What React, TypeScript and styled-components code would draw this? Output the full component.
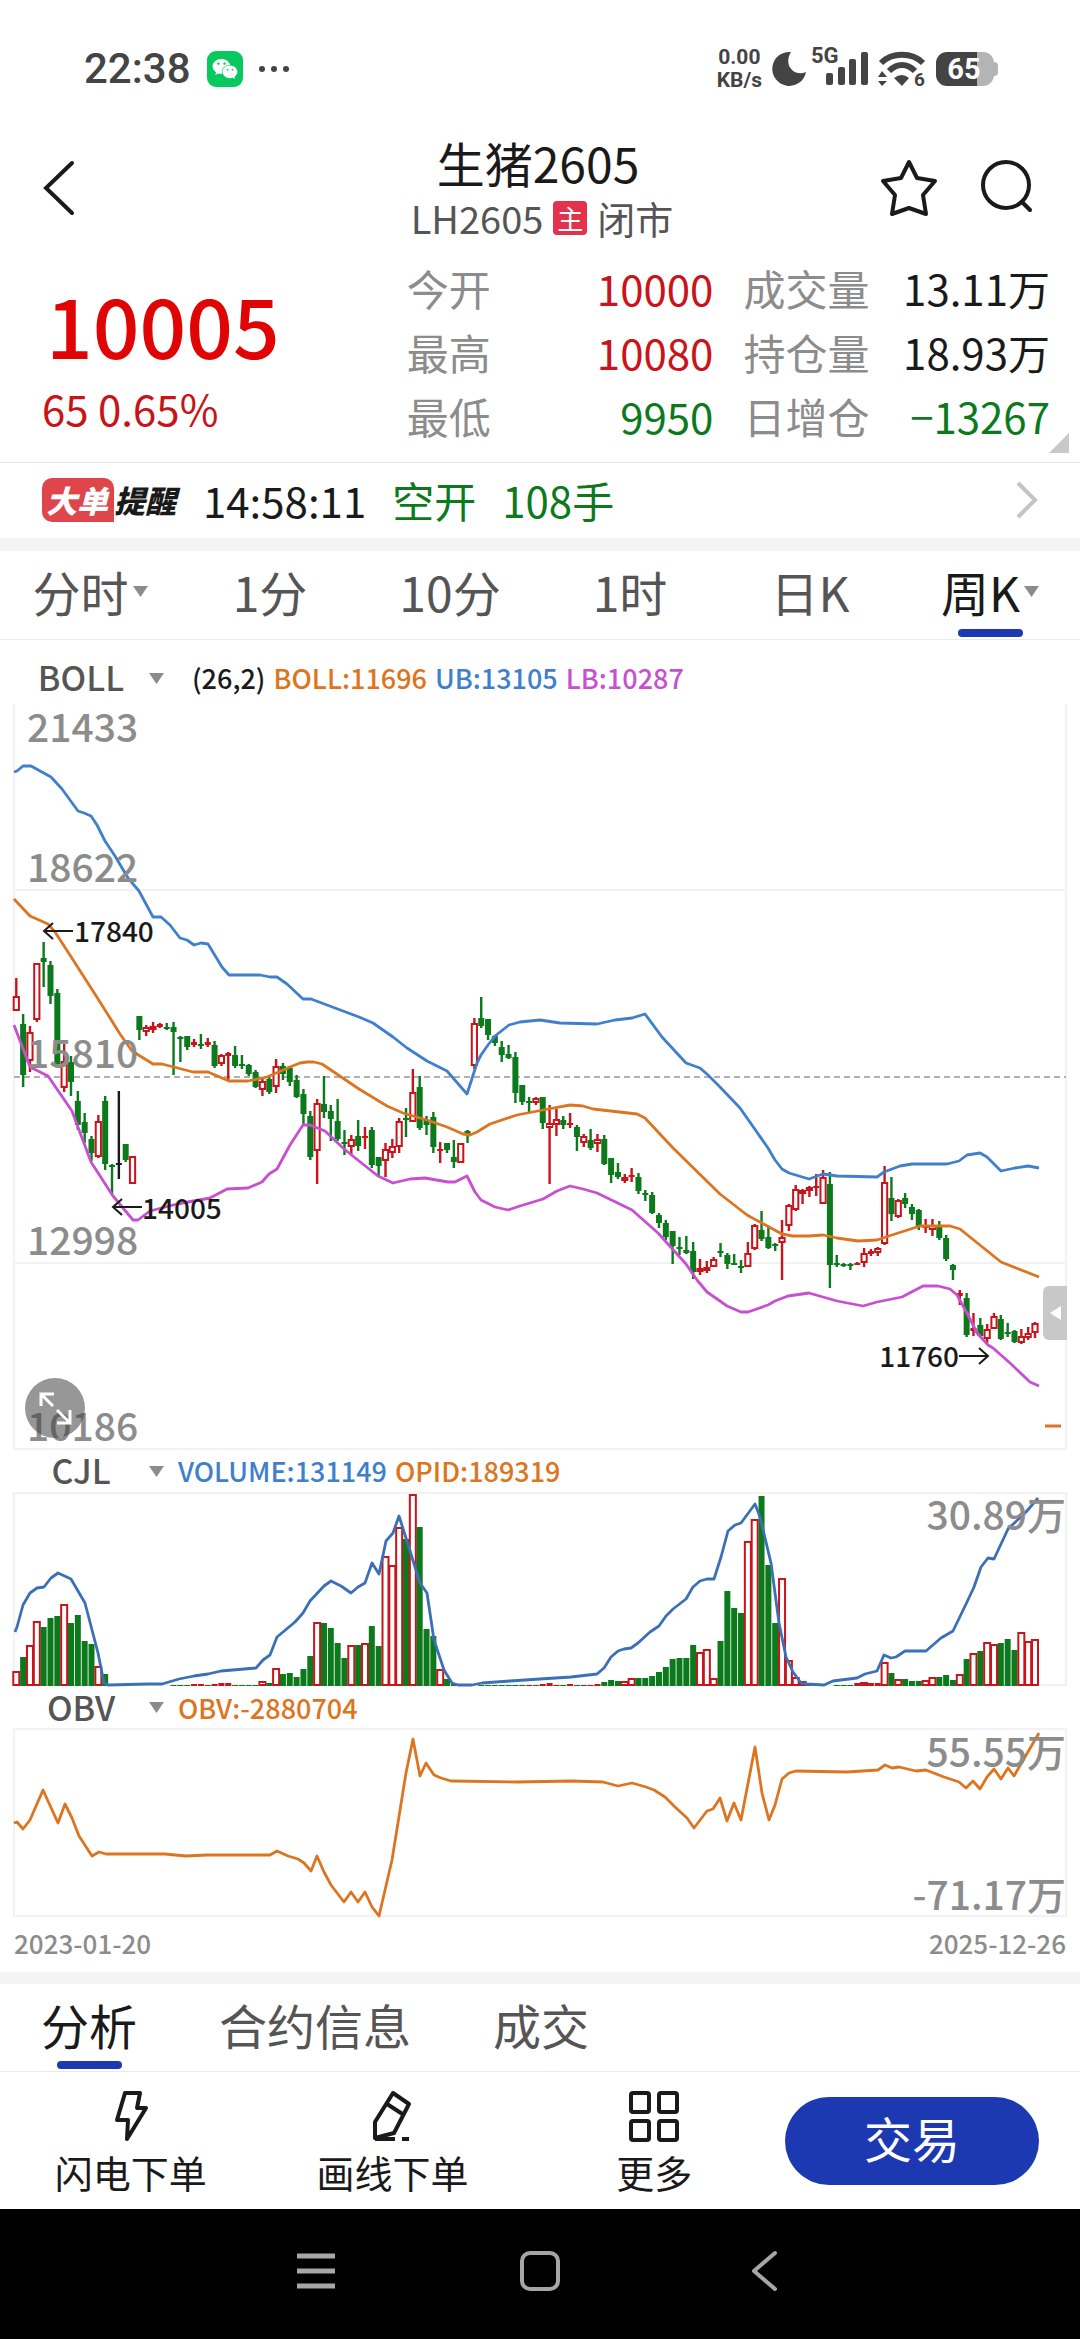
import React from "react";
import styled, { createGlobalStyle } from "styled-components";
import { FaWeixin } from "react-icons/fa";

const RED = "#c8141a";
const GREEN = "#0c7a1c";
const BLUE = "#3f7fcb";
const ORANGE = "#dd7520";
const PURPLE = "#c84fd0";
const INK = "#1a1a1a";
const GREY = "#8c8c8c";
const BRAND = "#1c39b2";

const GlobalStyle = createGlobalStyle`
  * { box-sizing: border-box; }
  body {
    margin: 0;
    background: #fff;
    color: ${INK};
    font-family: "Noto Sans CJK SC", "Noto Sans", sans-serif;
  }
  button, select {
    font: inherit;
    color: inherit;
    background: none;
    border: 0;
    padding: 0;
    margin: 0;
  }
  svg { display: block; flex: none; overflow: visible; }
  dl, dd, dt, h1, p { margin: 0; font-weight: inherit; }
`;

const Page = styled.div`
  display: flex;
  flex-direction: column;
  min-height: 100vh;
`;

/* ---------- status bar ---------- */

const StatusBar = styled.div`
  display: flex;
  align-items: center;
  justify-content: space-between;
  height: 112px;
  padding: 26px 82px 0 84px;
  color: #444;
`;

const StatusGroup = styled.div<{ $gap: number }>`
  display: flex;
  align-items: center;
  gap: ${(p) => p.$gap}px;
`;

const Clock = styled.span`
  font-family: Roboto, sans-serif;
  font-size: 42px;
  line-height: 48px;
  font-weight: 500;
`;

const WeChatBadge = styled.span`
  display: flex;
  align-items: center;
  justify-content: center;
  width: 36px;
  height: 36px;
  border-radius: 9px;
  background: #07c95f;
  color: #fff;
  font-size: 26px;
`;

const NetSpeed = styled.span`
  font-family: Roboto, sans-serif;
  font-size: 21px;
  line-height: 23px;
  font-weight: 700;
  text-align: center;
`;

const Battery = styled.span`
  display: flex;
  align-items: center;
  justify-content: center;
  width: 58px;
  height: 34px;
  padding-right: 2px;
  border-radius: 11px;
  background: linear-gradient(90deg, #444 0 70%, #b4b4b4 70%);
  color: #fff;
  font-family: Roboto, sans-serif;
  font-size: 29px;
  line-height: 34px;
  font-weight: 700;
`;

const BatteryWrap = styled.span`
  display: flex;
  align-items: center;
  &::after {
    content: "";
    width: 4px;
    height: 14px;
    border-radius: 0 4px 4px 0;
    background: #b4b4b4;
  }
`;

/* ---------- header ---------- */

const Header = styled.header`
  display: grid;
  grid-template-columns: 1fr auto 1fr;
  align-items: center;
  padding: 22px 46px 0 42px;
`;

const HeaderTitle = styled.div`
  display: flex;
  flex-direction: column;
  align-items: center;
  gap: 4px;
`;

const Title = styled.h1`
  font-size: 48px;
  line-height: 56px;
`;

const SubTitle = styled.div`
  display: flex;
  align-items: center;
  gap: 10px;
  padding-left: 8px;
  font-size: 38px;
  line-height: 48px;
  color: #555;
`;

const MainTag = styled.span`
  width: 34px;
  height: 34px;
  border-radius: 4px;
  background: #e5324c;
  color: #fff;
  font-size: 26px;
  line-height: 34px;
  text-align: center;
`;

const HeaderActions = styled.div`
  display: flex;
  justify-content: flex-end;
  gap: 42px;
`;

const IconButton = styled.button`
  display: flex;
  justify-self: start;
`;

/* ---------- quote ---------- */

const Quote = styled.section`
  position: relative;
  display: grid;
  grid-template-columns: 35% 1fr;
  padding: 14px 30px 14px 42px;
  border-bottom: 1px solid #e6e6e6;
`;

const Price = styled.p`
  padding: 16px 4px 0;
  font-size: 82px;
  line-height: 104px;
  font-weight: 500;
  color: #e00404;
`;

const Change = styled.p`
  font-size: 42px;
  line-height: 64px;
  color: #c81418;
`;

const Stats = styled.dl`
  display: grid;
  grid-auto-flow: column;
  grid-template-rows: repeat(3, 64px);
  grid-auto-columns: 1fr;
  column-gap: 30px;
  padding-left: 12px;
`;

const Stat = styled.div`
  display: flex;
  align-items: center;
  justify-content: space-between;
  font-size: 42px;
  line-height: 64px;
  white-space: nowrap;
`;

const StatName = styled.dt`
  color: ${GREY};
`;

const StatValue = styled.dd<{ $color: string }>`
  color: ${(p) => p.$color};
`;

const MoreCorner = styled.span`
  position: absolute;
  right: 11px;
  bottom: 9px;
  border-left: 20px solid transparent;
  border-bottom: 20px solid #c8c8c8;
`;

/* ---------- big order alert ---------- */

const Alert = styled.a`
  display: flex;
  align-items: center;
  height: 75px;
  padding: 0 41px 2px 42px;
  color: ${GREEN};
  font-size: 42px;
  line-height: 60px;
  text-decoration: none;
`;

const AlertLogo = styled.span`
  display: flex;
  align-items: center;
  margin-right: 27px;
  color: ${INK};
  font-size: 31px;
  line-height: 44px;
  font-weight: 900;
  font-style: italic;
`;

const AlertBadge = styled.span`
  padding: 0 6px 0 4px;
  border-radius: 10px 10px 0 10px;
  background: #df464c;
  color: #fff;
`;

const AlertTime = styled.time`
  margin-right: 26px;
  color: ${INK};
`;

const AlertAction = styled.span`
  margin-right: 26px;
`;

const AlertArrow = styled.span`
  margin-left: auto;
`;

const Band = styled.div<{ $height: number }>`
  height: ${(p) => p.$height}px;
  background: #f4f4f4;
`;

/* ---------- tabs ---------- */

const PeriodTabs = styled.nav`
  display: grid;
  grid-template-columns: repeat(6, 1fr);
  height: 89px;
  border-bottom: 1px solid #e9e9e9;
`;

const InfoTabs = styled.nav`
  display: flex;
  gap: 82px;
  height: 88px;
  padding-left: 41px;
  border-bottom: 1px solid #e9e9e9;
`;

const Tab = styled.button<{ $active?: boolean }>`
  display: flex;
  flex-direction: column;
  align-items: center;
  justify-content: space-between;
  padding: 7px 0 2px;
  font-size: 48px;
  line-height: 66px;
  color: ${(p) => (p.$active ? INK : "#555")};
  &::after {
    content: "";
    width: 65px;
    height: 8px;
    border-radius: 4px;
    background: ${(p) => (p.$active ? BRAND : "transparent")};
  }
`;

const TabLabel = styled.span`
  display: flex;
  align-items: center;
  gap: 4px;
`;

/* ---------- charts ---------- */

const IndicatorBar = styled.div<{ $height: number; $top?: number; $gap: number }>`
  display: flex;
  align-items: center;
  gap: ${(p) => p.$gap}px;
  height: ${(p) => p.$height}px;
  padding: ${(p) => p.$top ?? 0}px 13px 0;
`;

const Picker = styled.label`
  display: flex;
  align-items: center;
`;

const PickerSelect = styled.select`
  appearance: none;
  width: 136px;
  height: 44px;
  padding-bottom: 2px;
  font-size: 34px;
  line-height: 42px;
  font-weight: 500;
  color: #555;
  text-align-last: center;
`;

const Legend = styled.div`
  display: flex;
  gap: 8px;
  font-size: 27px;
  line-height: 40px;
  font-weight: 500;
`;

const LegendItem = styled.span<{ $color: string }>`
  color: ${(p) => p.$color};
`;

const ChartFrame = styled.div`
  position: relative;
  margin: 0 13px;
`;

const ChartSvg = styled.svg`
  width: 100%;
  height: auto;
  font-weight: 500;
`;

const ExpandButton = styled.button`
  position: absolute;
  left: 12px;
  bottom: 11px;
  width: 60px;
  height: 60px;
  border-radius: 50%;
  background: rgba(70, 70, 70, 0.56);
`;

const DrawerHandle = styled.button`
  position: absolute;
  right: 0;
  bottom: 14.7%;
  display: flex;
  align-items: center;
  justify-content: center;
  width: 24px;
  height: 54px;
  border-radius: 6px 0 0 6px;
  background: #c8c8c8;
`;

const DateRange = styled.div`
  display: flex;
  align-items: center;
  justify-content: space-between;
  height: 55px;
  padding: 0 14px 4px;
  font-size: 26px;
  line-height: 36px;
  font-weight: 500;
  color: ${GREY};
`;

/* ---------- bottom ---------- */

const ActionBar = styled.div`
  display: flex;
  align-items: center;
  height: 137px;
  padding: 0 41px 0 0;
`;

const Actions = styled.div`
  flex: 1;
  display: grid;
  grid-template-columns: repeat(3, 1fr);
`;

const Action = styled.button`
  display: flex;
  flex-direction: column;
  align-items: center;
  gap: 4px;
  padding-top: 6px;
  font-size: 38px;
  line-height: 52px;
`;

const TradeButton = styled.button`
  width: 254px;
  height: 88px;
  padding-bottom: 8px;
  border-radius: 44px;
  background: ${BRAND};
  color: #fff;
  font-size: 48px;
  line-height: 80px;
`;

const SystemNav = styled.nav`
  display: grid;
  grid-template-columns: repeat(3, 224px);
  justify-content: center;
  justify-items: center;
  align-items: center;
  flex: 1;
  min-height: 130px;
  padding-bottom: 6px;
  background: #000;
`;

const NavButton = styled.button`
  display: flex;
`;

/* ---------- data ---------- */

type Candle = [string, number, number, number, number];

// kind (r = up, g = down, k = flat), high, body top, body bottom, low
const candles: Candle[] = [
  ["r", 978, 996, 1011, 1011], ["g", 1014, 1024, 1075, 1087], ["r", 1026, 1032, 1061, 1072], ["r", 963, 963, 1020, 1022],
  ["g", 942, 958, 962, 987], ["g", 961, 965, 996, 1004], ["g", 989, 993, 1064, 1066], ["r", 1044, 1061, 1088, 1092],
  ["g", 1056, 1062, 1082, 1096], ["g", 1091, 1101, 1125, 1130], ["g", 1113, 1122, 1133, 1143], ["g", 1136, 1139, 1153, 1161],
  ["r", 1115, 1121, 1157, 1158], ["g", 1096, 1101, 1164, 1170], ["g", 1164, 1165, 1167, 1195], ["k", 1091, 1163, 1165, 1179],
  ["g", 1144, 1144, 1160, 1162], ["r", 1156, 1156, 1184, 1184], ["g", 1016, 1016, 1030, 1040], ["r", 1025, 1027, 1032, 1036],
  ["r", 1022, 1026, 1030, 1033], ["r", 1023, 1024, 1027, 1028], ["g", 1023, 1027, 1029, 1030], ["g", 1022, 1027, 1032, 1075],
  ["g", 1036, 1037, 1039, 1062], ["g", 1036, 1036, 1047, 1050], ["r", 1039, 1042, 1045, 1047], ["g", 1034, 1044, 1045, 1049],
  ["r", 1038, 1042, 1045, 1047], ["g", 1041, 1045, 1066, 1068], ["r", 1054, 1055, 1064, 1066], ["r", 1052, 1053, 1056, 1080],
  ["g", 1046, 1055, 1066, 1068], ["g", 1055, 1064, 1065, 1069], ["g", 1064, 1065, 1074, 1076], ["g", 1070, 1072, 1087, 1088],
  ["r", 1079, 1081, 1090, 1096], ["g", 1076, 1079, 1092, 1094], ["r", 1059, 1066, 1087, 1093], ["g", 1063, 1066, 1074, 1080],
  ["g", 1066, 1068, 1082, 1086], ["g", 1075, 1080, 1097, 1098], ["g", 1089, 1094, 1114, 1125], ["g", 1111, 1116, 1157, 1160],
  ["r", 1099, 1103, 1151, 1184], ["g", 1076, 1104, 1112, 1118], ["g", 1105, 1111, 1119, 1141], ["g", 1099, 1121, 1139, 1141],
  ["g", 1130, 1142, 1144, 1155], ["r", 1135, 1139, 1147, 1154], ["g", 1120, 1136, 1146, 1151], ["r", 1127, 1136, 1138, 1149],
  ["g", 1127, 1130, 1165, 1168], ["g", 1157, 1157, 1166, 1176], ["r", 1143, 1149, 1161, 1177], ["r", 1139, 1146, 1153, 1158],
  ["r", 1118, 1121, 1147, 1153], ["g", 1108, 1118, 1119, 1137], ["r", 1069, 1092, 1122, 1122], ["g", 1076, 1087, 1128, 1130],
  ["g", 1116, 1120, 1125, 1135], ["g", 1112, 1117, 1147, 1153], ["r", 1142, 1149, 1150, 1163], ["g", 1143, 1143, 1150, 1153],
  ["g", 1140, 1157, 1162, 1168], ["r", 1143, 1143, 1163, 1163], ["g", 1130, 1131, 1135, 1143], ["r", 1018, 1023, 1066, 1069],
  ["g", 997, 1018, 1026, 1028], ["g", 1019, 1019, 1035, 1040], ["g", 1035, 1036, 1043, 1046], ["g", 1041, 1047, 1055, 1062],
  ["g", 1045, 1054, 1058, 1059], ["g", 1052, 1057, 1093, 1103], ["g", 1085, 1085, 1102, 1105], ["g", 1097, 1101, 1102, 1112],
  ["r", 1097, 1098, 1103, 1105], ["g", 1097, 1097, 1123, 1129], ["r", 1105, 1123, 1128, 1184], ["r", 1109, 1119, 1125, 1136],
  ["g", 1116, 1120, 1125, 1129], ["r", 1113, 1123, 1125, 1128], ["g", 1125, 1127, 1137, 1151], ["r", 1134, 1136, 1143, 1147],
  ["g", 1129, 1140, 1148, 1150], ["r", 1134, 1139, 1144, 1152], ["g", 1135, 1139, 1164, 1165], ["g", 1158, 1158, 1175, 1183],
  ["g", 1163, 1172, 1177, 1179], ["r", 1174, 1177, 1181, 1183], ["r", 1168, 1175, 1177, 1182], ["g", 1173, 1177, 1191, 1194],
  ["g", 1190, 1193, 1195, 1201], ["g", 1192, 1195, 1213, 1214], ["g", 1213, 1215, 1223, 1228], ["g", 1220, 1223, 1237, 1240],
  ["g", 1231, 1231, 1246, 1264], ["g", 1237, 1247, 1249, 1255], ["g", 1236, 1250, 1253, 1254], ["g", 1242, 1251, 1272, 1279],
  ["r", 1259, 1268, 1272, 1275], ["r", 1261, 1267, 1271, 1273], ["r", 1257, 1259, 1267, 1267], ["g", 1243, 1251, 1253, 1257],
  ["g", 1253, 1255, 1264, 1269], ["g", 1254, 1263, 1264, 1265], ["g", 1260, 1266, 1267, 1273], ["r", 1242, 1253, 1267, 1267],
  ["r", 1224, 1225, 1249, 1250], ["g", 1211, 1230, 1239, 1241], ["g", 1227, 1237, 1248, 1249], ["g", 1243, 1244, 1246, 1251],
  ["r", 1220, 1237, 1243, 1280], ["r", 1204, 1205, 1226, 1231], ["r", 1185, 1189, 1210, 1211], ["r", 1189, 1190, 1194, 1204],
  ["r", 1186, 1187, 1191, 1197], ["r", 1174, 1186, 1188, 1196], ["r", 1170, 1177, 1204, 1204], ["g", 1172, 1184, 1265, 1288],
  ["g", 1255, 1263, 1264, 1267], ["g", 1263, 1264, 1266, 1267], ["g", 1263, 1264, 1266, 1270], ["r", 1262, 1263, 1264, 1265],
  ["r", 1248, 1253, 1263, 1267], ["r", 1249, 1251, 1254, 1256], ["r", 1247, 1248, 1253, 1256], ["r", 1166, 1182, 1244, 1245],
  ["g", 1177, 1198, 1214, 1221], ["r", 1199, 1200, 1217, 1218], ["g", 1193, 1198, 1204, 1208], ["g", 1204, 1207, 1214, 1220],
  ["g", 1209, 1210, 1227, 1230], ["r", 1219, 1225, 1228, 1233], ["r", 1219, 1225, 1230, 1236], ["g", 1221, 1226, 1238, 1240],
  ["g", 1235, 1238, 1259, 1261], ["g", 1264, 1265, 1270, 1280], ["r", 1290, 1293, 1296, 1305], ["g", 1293, 1298, 1335, 1337],
  ["r", 1313, 1328, 1331, 1336], ["g", 1318, 1325, 1336, 1337], ["r", 1324, 1329, 1339, 1343], ["r", 1313, 1316, 1329, 1329],
  ["g", 1315, 1319, 1339, 1340], ["g", 1323, 1332, 1333, 1337], ["g", 1330, 1331, 1342, 1343], ["r", 1329, 1336, 1343, 1344],
  ["r", 1327, 1333, 1338, 1340], ["r", 1322, 1323, 1333, 1338],
];

// One entry per week, "r" for an up week and "g" for a down week, followed by the bar height
const volumes = (
  "r15 g29 r41 r65 g59 g68 g70 r82 g63 g71 g45 g42 r20 g12 g0 g0 g0 g0 g0 g0 g0 g0 g0 g1 g1 g1 r2 r2 g1 r2 " +
  "r3 r3 g1 g1 g1 g1 r5 g3 r18 g12 g13 g9 g17 g30 r64 g63 g58 g43 g28 r41 g41 r43 g60 g40 r130 r121 r159 g147 r192 g159 " +
  "g57 g50 r17 g7 g2 g0 g0 g0 g1 g1 g1 g1 g1 g1 g1 r1 g1 r2 r3 r1 g1 r2 g1 r1 r1 r2 g4 g6 g5 r5 " +
  "r8 g8 g8 g10 g14 g19 g27 g28 g28 g41 r34 r37 r8 g45 g95 g78 g73 r145 r167 g190 g121 g63 r108 r26 r9 r5 g1 g0 g0 g0 " +
  "g1 g1 g1 r3 r4 r3 r3 r24 g13 r7 g7 g5 g5 r6 r9 g9 g11 g6 r12 g27 r33 g35 r44 r42 g43 g47 g36 r54 r45 r47"
).split(" ");

const upperBand =
  "14,772 17,771 23,766 31,766 51,777 62,789 78,811 84,813 91,816 97,825 105,841 115,856 128,878 139,891 153,917 161,917 170,925 180,938 187,940 194,945 201,943 208,944 222,967 229,975 260,975 270,977 277,977 287,984 303,999 311,999 343,1011 359,1017 373,1023 393,1037 407,1048 427,1061 447,1071 467,1094 477,1063 481,1055 488,1045 495,1036 509,1025 520,1022 540,1020 560,1023 597,1024 615,1020 632,1018 645,1014 662,1037 686,1063 700,1068 708,1075 720,1087 740,1108 768,1148 775,1160 782,1169 789,1173 809,1179 823,1174 837,1176 877,1177 884,1172 900,1166 912,1164 947,1164 959,1161 967,1155 980,1153 987,1157 1001,1171 1015,1168 1028,1166 1039,1168";
const middleBand =
  "14,899 30,916 48,924 55,932 68,952 100,1002 120,1034 132,1051 153,1064 162,1064 193,1072 208,1072 229,1081 248,1081 267,1077 290,1067 300,1063 307,1062 314,1062 322,1064 359,1089 387,1106 403,1113 427,1120 447,1127 463,1134 470,1135 477,1132 490,1124 517,1115 543,1110 570,1105 583,1106 593,1109 637,1114 645,1118 673,1148 720,1194 747,1215 782,1234 793,1236 809,1236 823,1235 837,1238 858,1241 877,1240 892,1235 920,1226 933,1226 950,1226 960,1229 1001,1262 1039,1277";
const lowerBand =
  "14,1025 30,1067 48,1076 72,1111 91,1162 113,1196 133,1220 138,1220 150,1211 177,1204 210,1198 227,1189 248,1188 262,1182 269,1174 277,1169 290,1145 303,1125 310,1125 325,1131 343,1148 359,1161 378,1176 393,1183 410,1179 425,1178 448,1182 455,1182 467,1176 475,1192 481,1200 495,1207 508,1210 520,1206 543,1199 557,1191 570,1186 583,1189 597,1193 632,1210 658,1233 686,1264 697,1280 707,1292 720,1301 727,1306 741,1312 748,1312 768,1305 775,1301 788,1296 809,1293 837,1301 863,1306 877,1302 902,1297 923,1286 938,1286 950,1289 957,1295 967,1313 977,1333 988,1345 993,1348 1010,1363 1030,1382 1039,1386";
const openInterest =
  "15,1632 17,1627 23,1605 30,1593 37,1588 44,1587 51,1578 58,1573 71,1579 85,1603 98,1653 104,1683 108,1685 148,1684 162,1684 179,1679 194,1676 208,1674 221,1671 256,1668 263,1660 270,1655 277,1637 295,1622 303,1613 310,1601 324,1586 331,1581 341,1586 351,1593 358,1587 365,1583 372,1563 379,1574 386,1541 393,1533 399,1516 406,1538 420,1583 427,1593 434,1640 444,1670 452,1683 458,1685 472,1685 482,1683 510,1681 540,1679 571,1677 597,1674 604,1668 611,1657 618,1651 624,1649 631,1648 638,1643 650,1632 659,1626 666,1616 673,1609 686,1599 693,1587 700,1581 707,1579 714,1579 721,1557 728,1531 735,1525 741,1523 755,1504 760,1517 771,1563 779,1623 786,1657 793,1672 801,1683 807,1684 824,1685 833,1681 857,1678 865,1674 877,1671 884,1655 891,1658 896,1657 905,1651 926,1651 941,1638 953,1631 967,1602 974,1587 981,1567 988,1558 994,1559 1001,1544 1008,1529 1026,1512 1038,1498";
const obvLine =
  "14,1823 17,1822 23,1829 30,1820 43,1790 58,1823 65,1804 72,1818 79,1836 92,1856 99,1852 106,1854 165,1854 186,1856 207,1855 255,1855 270,1855 277,1851 288,1856 298,1859 304,1863 311,1871 317,1856 324,1872 331,1885 344,1902 351,1892 358,1902 365,1892 372,1907 379,1916 392,1860 406,1773 413,1739 420,1776 426,1763 434,1775 441,1778 451,1781 517,1782 572,1781 603,1782 618,1786 632,1783 646,1787 654,1790 665,1797 675,1807 687,1818 694,1828 707,1811 713,1809 720,1798 727,1821 734,1803 741,1820 755,1747 762,1793 769,1820 775,1805 782,1779 789,1773 796,1771 847,1772 878,1770 885,1765 892,1768 899,1767 916,1771 926,1770 944,1777 959,1782 966,1788 973,1781 980,1789 987,1777 994,1769 1001,1779 1008,1768 1014,1776 1025,1757 1039,1733";

const weekX = (i: number) => 16.3 + i * 6.837;

const periods = [
  { name: "分时", menu: true },
  { name: "1分" },
  { name: "10分" },
  { name: "1时" },
  { name: "日K" },
  { name: "周K", menu: true, active: true },
];

const stats = [
  { name: "今开", value: "10000", color: RED },
  { name: "最高", value: "10080", color: RED },
  { name: "最低", value: "9950", color: GREEN },
  { name: "成交量", value: "13.11万", color: INK },
  { name: "持仓量", value: "18.93万", color: INK },
  { name: "日增仓", value: "−13267", color: GREEN },
];

/* ---------- pieces ---------- */

const Triangle = () => (
  <svg width="15" height="11" viewBox="0 0 15 11" fill={GREY}>
    <path d="M0 0h15L7.5 11z" />
  </svg>
);

function Indicator(props: {
  name: string;
  height: number;
  top?: number;
  gap: number;
  items: [string, string][];
}) {
  return (
    <IndicatorBar $height={props.height} $top={props.top} $gap={props.gap}>
      <Picker>
        <PickerSelect aria-label={props.name} defaultValue={props.name}>
          <option>{props.name}</option>
        </PickerSelect>
        <Triangle />
      </Picker>
      <Legend>
        {props.items.map(([text, color]) => (
          <LegendItem key={text} $color={color}>
            {text}
          </LegendItem>
        ))}
      </Legend>
    </IndicatorBar>
  );
}

const Line = ({ points, color }: { points: string; color: string }) => (
  <polyline points={points} fill="none" stroke={color} strokeWidth="2.8" strokeLinejoin="round" />
);

function PriceChart() {
  return (
    <ChartFrame>
      <ChartSvg viewBox="13 704 1054 745">
        <path d="M14 704V1449H1066V704M14 890H1066M14 1263H1066" fill="none" stroke="#f2f2f2" strokeWidth="2" />
        <path d="M14 1077H1066" stroke="#b0b0b0" strokeWidth="2" strokeDasharray="6 4" />
        {candles.map(([kind, high, top, bottom, low], i) => {
          const x = weekX(i);
          const color = kind === "r" ? RED : kind === "g" ? GREEN : INK;
          const size = Math.max(bottom - top, 2);
          return (
            <g key={i} stroke={color} strokeWidth="2.4">
              <path d={`M${x} ${high}V${top}M${x} ${bottom}V${low}`} />
              {kind === "r" && size > 3 ? (
                <rect x={x - 2.6} y={top + 1} width="5.2" height={size - 2} fill="#fff" strokeWidth="2" />
              ) : (
                <rect x={x - 3} y={top} width="6" height={size} fill={color} stroke="none" />
              )}
            </g>
          );
        })}
        <Line points={upperBand} color={BLUE} />
        <Line points={middleBand} color={ORANGE} />
        <Line points={lowerBand} color={PURPLE} />
        <path d="M1045 1426h16" stroke={ORANGE} strokeWidth="3" />
        <g fontSize="39" fill={GREY}>
          <text x="27" y="742">21433</text>
          <text x="27" y="882">18622</text>
          <text x="27" y="1068">15810</text>
          <text x="27" y="1255">12998</text>
          <text x="27" y="1441">10186</text>
        </g>
        <g fontSize="28" fill={INK}>
          <text x="74" y="942">17840</text>
          <text x="142" y="1219">14005</text>
          <text x="959" y="1367" textAnchor="end">11760</text>
        </g>
        <path
          d="M73 931H44M53 923l-9 8 9 8M142 1207H113M122 1199l-9 8 9 8M959 1356h28M979 1348l9 8-9 8"
          fill="none"
          stroke={INK}
          strokeWidth="2"
        />
      </ChartSvg>
      <ExpandButton aria-label="全屏">
        <svg width="60" height="60" viewBox="0 0 60 60" fill="none" stroke="#fff" strokeWidth="3">
          <path d="M28 28L16 16M16 28V16h13M32 32l13 13M45 32v13H32" />
        </svg>
      </ExpandButton>
      <DrawerHandle aria-label="展开">
        <svg width="11" height="14" viewBox="0 0 11 14" fill="#fff">
          <path d="M11 0v14L0 7z" />
        </svg>
      </DrawerHandle>
    </ChartFrame>
  );
}

function VolumeChart() {
  return (
    <ChartFrame>
      <ChartSvg viewBox="13 1493 1054 193">
        <path d="M14 1685V1493H1066V1685z" fill="none" stroke="#f2f2f2" strokeWidth="2" />
        {volumes.map((entry, i) => {
          const height = Number(entry.slice(1));
          const x = weekX(i);
          if (height === 0) return null;
          return entry[0] === "r" && height > 3 ? (
            <rect key={i} x={x - 3} y={1687 - height} width="6" height={height - 2} fill="#fff" stroke={RED} strokeWidth="2" />
          ) : (
            <rect key={i} x={x - 3} y={1686 - height} width="6" height={height} fill={entry[0] === "r" ? RED : GREEN} />
          );
        })}
        <Line points={openInterest} color="#3b6fb6" />
        <text x="1066" y="1530" fontSize="39" fill={GREY} textAnchor="end">30.89万</text>
      </ChartSvg>
    </ChartFrame>
  );
}

function ObvChart() {
  return (
    <ChartFrame>
      <ChartSvg viewBox="13 1729 1054 188">
        <path d="M14 1729H1066V1916H14z" fill="none" stroke="#f2f2f2" strokeWidth="2" />
        <Line points={obvLine} color={ORANGE} />
        <g fontSize="39" fill={GREY} textAnchor="end">
          <text x="1066" y="1767">55.55万</text>
          <text x="1066" y="1910">-71.17万</text>
        </g>
      </ChartSvg>
    </ChartFrame>
  );
}

export default function App() {
  return (
    <Page>
      <GlobalStyle />
      <StatusBar>
        <StatusGroup $gap={16}>
          <Clock>22:38</Clock>
          <WeChatBadge>
            <FaWeixin />
          </WeChatBadge>
          <svg width="30" height="6" viewBox="0 0 30 6" fill="#444">
            <circle cx="3" cy="3" r="3" />
            <circle cx="15" cy="3" r="3" />
            <circle cx="27" cy="3" r="3" />
          </svg>
        </StatusGroup>
        <StatusGroup $gap={10}>
          <NetSpeed>
            0.00
            <br />
            KB/s
          </NetSpeed>
          <StatusGroup $gap={4}>
            <svg width="35" height="36" viewBox="0 0 35 36" fill="#444">
              <path d="M19 1A17 17 0 1 0 34 21C22 26 11 14 19 1z" />
            </svg>
            <svg width="57" height="40" viewBox="0 0 57 40" fill="#444" fontFamily="Roboto" fontSize="22" fontWeight="700">
              <text x="0" y="14">5G</text>
              <rect x="15" y="24" width="7" height="12" rx="2" />
              <rect x="27" y="18" width="7" height="18" rx="2" />
              <rect x="38" y="10" width="7" height="26" rx="2" />
              <rect x="50" y="3" width="7" height="33" rx="2" />
            </svg>
          </StatusGroup>
          <svg width="48" height="38" viewBox="0 0 48 38" fill="none" stroke="#444">
            <path d="M3 13C14 2 34 2 45 13M11 21c8-8 18-8 26 0" strokeWidth="6" />
            <path d="M16 28q8-6 15 0l-7 8z" fill="#444" stroke="none" />
            <path d="M0 27l4-6 5 6zM0 31l4 5 5-5z" fill="#444" stroke="none" />
            <text x="36" y="36" fill="#444" stroke="none" fontFamily="Roboto" fontSize="19" fontWeight="700">6</text>
          </svg>
          <BatteryWrap>
            <Battery>65</Battery>
          </BatteryWrap>
        </StatusGroup>
      </StatusBar>

      <Header>
        <IconButton aria-label="返回">
          <svg width="34" height="58" viewBox="0 0 34 58" fill="none" stroke={INK} strokeWidth="4" strokeLinecap="round">
            <path d="M30 4L4 29l26 25" />
          </svg>
        </IconButton>
        <HeaderTitle>
          <Title>生猪2605</Title>
          <SubTitle>
            LH2605<MainTag>主</MainTag>闭市
          </SubTitle>
        </HeaderTitle>
        <HeaderActions>
          <IconButton aria-label="自选">
            <svg width="58" height="58" viewBox="0 0 58 58" fill="none" stroke={INK} strokeWidth="4" strokeLinejoin="round">
              <path d="M29 3L37 19L55 22L43 36L46 55L29 49L12 55L15 36L3 22L21 19z" />
            </svg>
          </IconButton>
          <IconButton aria-label="搜索">
            <svg width="54" height="54" viewBox="0 0 54 54" fill="none" stroke={INK} strokeWidth="4" strokeLinecap="round">
              <circle cx="26" cy="26" r="23" />
              <path d="M42 43l8 8" />
            </svg>
          </IconButton>
        </HeaderActions>
      </Header>

      <Quote>
        <div>
          <Price>10005</Price>
          <Change>65 0.65%</Change>
        </div>
        <Stats>
          {stats.map((s) => (
            <Stat key={s.name}>
              <StatName>{s.name}</StatName>
              <StatValue $color={s.color}>{s.value}</StatValue>
            </Stat>
          ))}
        </Stats>
        <MoreCorner />
      </Quote>

      <Alert href="#alerts">
        <AlertLogo>
          <AlertBadge>大单</AlertBadge>提醒
        </AlertLogo>
        <AlertTime>14:58:11</AlertTime>
        <AlertAction>空开</AlertAction>
        <span>108手</span>
        <AlertArrow>
          <svg width="24" height="38" viewBox="0 0 24 38" fill="none" stroke="#c4c4c4" strokeWidth="4">
            <path d="M3 2l17 17L3 36" />
          </svg>
        </AlertArrow>
      </Alert>
      <Band $height={13} />

      <PeriodTabs>
        {periods.map((p) => (
          <Tab key={p.name} $active={p.active}>
            <TabLabel>
              {p.name}
              {p.menu && <Triangle />}
            </TabLabel>
          </Tab>
        ))}
      </PeriodTabs>

      <Indicator
        name="BOLL"
        height={64}
        top={12}
        gap={28}
        items={[
          ["(26,2)", INK],
          ["BOLL:11696", ORANGE],
          ["UB:13105", BLUE],
          ["LB:10287", PURPLE],
        ]}
      />
      <PriceChart />
      <Indicator
        name="CJL"
        height={44}
        gap={14}
        items={[
          ["VOLUME:131149", BLUE],
          ["OPID:189319", ORANGE],
        ]}
      />
      <VolumeChart />
      <Indicator name="OBV" height={43} gap={14} items={[["OBV:-2880704", ORANGE]]} />
      <ObvChart />
      <DateRange>
        <time>2023-01-20</time>
        <time>2025-12-26</time>
      </DateRange>
      <Band $height={12} />

      <InfoTabs>
        <Tab $active>分析</Tab>
        <Tab>合约信息</Tab>
        <Tab>成交</Tab>
      </InfoTabs>

      <ActionBar>
        <Actions>
          <Action>
            <svg width="36" height="52" viewBox="0 0 36 52" fill="none" stroke={INK} strokeWidth="4" strokeLinejoin="round">
              <path d="M12 3H27L24 18H33L14 49L15 30H4z" />
            </svg>
            闪电下单
          </Action>
          <Action>
            <svg width="42" height="52" viewBox="0 0 42 52" fill="none" stroke={INK} strokeWidth="4" strokeLinejoin="round">
              <path d="M22 3L38 14L23 43L4 48V32zM16 14l17 11M4 49H24M31 49h7" />
            </svg>
            画线下单
          </Action>
          <Action>
            <svg width="52" height="52" viewBox="0 0 52 52" fill="none" stroke={INK} strokeWidth="4">
              <rect x="3" y="3" width="18" height="19" rx="2" />
              <rect x="31" y="3" width="18" height="19" rx="2" />
              <rect x="3" y="31" width="18" height="19" rx="2" />
              <rect x="31" y="31" width="18" height="19" rx="2" />
            </svg>
            更多
          </Action>
        </Actions>
        <TradeButton>交易</TradeButton>
      </ActionBar>

      <SystemNav>
        <NavButton aria-label="最近任务">
          <svg width="38" height="38" viewBox="0 0 38 38" stroke="#a6a6a6" strokeWidth="5">
            <path d="M0 4H38M0 19H38M0 34H38" />
          </svg>
        </NavButton>
        <NavButton aria-label="主页">
          <svg width="42" height="42" viewBox="0 0 42 42" fill="none" stroke="#a6a6a6" strokeWidth="4">
            <rect x="3" y="3" width="36" height="36" rx="8" />
          </svg>
        </NavButton>
        <NavButton aria-label="后退">
          <svg width="28" height="42" viewBox="0 0 28 42" fill="none" stroke="#a6a6a6" strokeWidth="4" strokeLinecap="round" strokeLinejoin="round">
            <path d="M25 3L4 21l21 18" />
          </svg>
        </NavButton>
      </SystemNav>
    </Page>
  );
}
